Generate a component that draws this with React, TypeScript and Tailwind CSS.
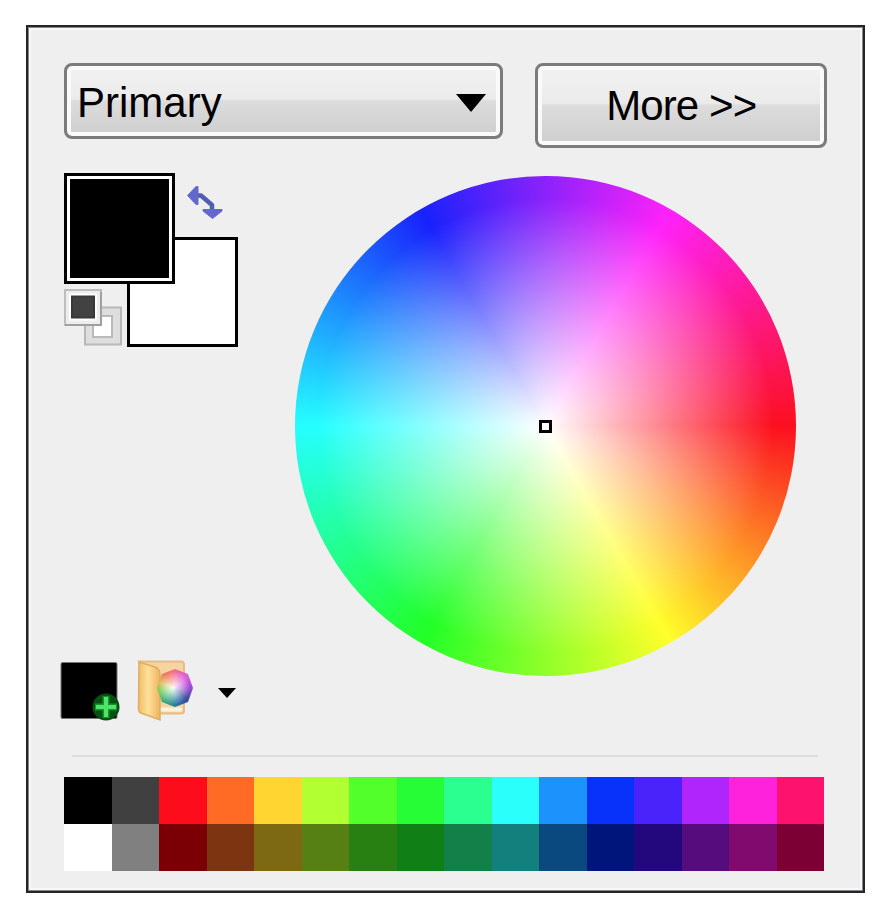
const topRow = [
  "bg-[#000000]", "bg-[#404040]", "bg-[#fd0c1b]", "bg-[#ff6a24]", "bg-[#ffd532]", "bg-[#b2ff32]",
  "bg-[#52ff2b]", "bg-[#27fd36]", "bg-[#2bff90]", "bg-[#2bfffb]", "bg-[#1c93fc]", "bg-[#0832fa]",
  "bg-[#4a22fa]", "bg-[#af25fc]", "bg-[#ff22dc]", "bg-[#fd126e]",
];

const bottomRow = [
  "bg-[#ffffff]", "bg-[#808080]", "bg-[#7b0005]", "bg-[#7d3410]", "bg-[#7d6813]", "bg-[#568013]",
  "bg-[#298012]", "bg-[#108016]", "bg-[#128048]", "bg-[#13807d]", "bg-[#0a4880]", "bg-[#00157c]",
  "bg-[#23077c]", "bg-[#560c7c]", "bg-[#800a6d]", "bg-[#7c0033]",
];

function SwapIcon() {
  return (
    <svg className="absolute left-[122px] top-[11px]" width="38" height="38" viewBox="0 0 38 38">
      <path d="M10 11.5 H15 L26 21 V27" fill="none" stroke="#4e5fb0" strokeWidth="4.5" strokeLinejoin="round" />
      <path d="M1.500 11.500 L10 2.500 H12 V20.500 H10 Z" fill="#6468cc" stroke="#6468cc" strokeLinejoin="round" />
      <path d="M17 25.500 V27 L26.500 34.500 L36 27 V25.500 Z" fill="#6468cc" stroke="#6468cc" strokeLinejoin="round" />
    </svg>
  );
}

function ResetColorsIcon() {
  return (
    <svg className="absolute left-0 top-[115px]" width="59" height="59" viewBox="0 0 59 59">
      <rect x="21" y="19.500" width="36" height="37" fill="#dedede" stroke="#b8b8b8" strokeWidth="2" />
      <rect x="29" y="28" width="19" height="21" fill="#fff" stroke="#bababa" strokeWidth="2" />
      <rect x="1" y="2" width="36" height="35" fill="#ededed" stroke="#bdbdbd" strokeWidth="2" />
      <path d="M1 37 H37 V4" fill="none" stroke="#a0a0a0" strokeWidth="2" />
      <rect x="6" y="6.500" width="26" height="25" fill="#393939" stroke="#fff" strokeWidth="2" />
      <rect x="9" y="9.500" width="20" height="19" fill="#424242" />
    </svg>
  );
}

function AddColorIcon() {
  return (
    <svg width="64" height="64" viewBox="0 0 64 64">
      <rect x="1" y="2.500" width="56" height="56" rx="1.500" fill="#000" stroke="#777" />
      <circle cx="46" cy="47" r="13.500" fill="#075012" />
      <path d="M46 36 V58 M35 47 H57" stroke="#17952d" strokeWidth="7" />
      <path d="M46 37 V57 M36 47 H56" stroke="#4ce569" strokeWidth="4" />
    </svg>
  );
}

function PaletteFolderIcon() {
  return (
    <svg width="60" height="64" viewBox="0 0 60 64">
      <defs>
        <linearGradient id="folder" x1="0" x2="1">
          <stop offset="0" stopColor="#efbd68" />
          <stop offset=".45" stopColor="#ffe09a" />
          <stop offset="1" stopColor="#edb45f" />
        </linearGradient>
        <clipPath id="hex"><path d="M38 9 L51 14 L56 28 L51 42 L38 47 L25 42 L20 28 L25 14 Z" /></clipPath>
      </defs>
      <path d="M2 1.500 H44 Q47 1.500 47 5 V51 Q47 53.500 44 53.500 H20 Z" fill="#f6d3a0" stroke="#e6bd88" strokeWidth="2" />
      <path d="M23 49.500 H45" stroke="#fff2dc" strokeWidth="4" />
      <path d="M2 2 L18 7 Q23 9 23 15 V60 L4 53 Q1.500 52 1.500 49 Z" fill="url(#folder)" stroke="#dfae64" strokeWidth="1.500" />
      <foreignObject x="20" y="9" width="36" height="38" clipPath="url(#hex)">
        <div className="h-full w-full bg-[radial-gradient(circle_at_45%_50%,#fffffff0_0%,#ffffff90_25%,transparent_62%),conic-gradient(from_0deg,#f06a96,#d95be2_50deg,#9a48d2_90deg,#344b9c_135deg,#237aa8_175deg,#2faa72_220deg,#68c944_260deg,#d5b544_290deg,#ef704f_325deg,#f06a96)]" />
      </foreignObject>
    </svg>
  );
}

export default function App() {
  return (
    <div className="h-[914px] w-[892px] bg-white pl-[26px] pt-[25px] font-['Liberation_Sans',Arial,sans-serif] text-black">
      <main className="flex h-[868px] w-[839px] flex-col border-[2px] border-[#242529] bg-[#efefef] px-[36px] pt-[36px] shadow-[inset_0_0_0_1px_#85868a,inset_0_0_0_3px_#f8f8f8]">
        <div className="flex items-start gap-8">
          <button className="flex h-[76px] w-[440px] items-center justify-between rounded-[8px] border-[3px] border-[#7b7b7b] bg-[linear-gradient(#f2f2f2_0%,#ebebeb_47%,#dcdcdc_50%,#cecece_100%)] pl-[10px] pr-[14px] shadow-[inset_0_0_0_4px_#fafafa]">
            <span className="pt-[3px] text-[42px] leading-[48px]">Primary</span>
            <svg className="mt-[3px]" width="30" height="18" viewBox="0 0 30 18"><path d="M0 0 H30 L15 18 Z" /></svg>
          </button>
          <button className="flex h-[85px] w-[292px] items-center justify-center rounded-[8px] border-[3px] border-[#7b7b7b] bg-[linear-gradient(#f2f2f2_0%,#ebebeb_47%,#dcdcdc_50%,#cecece_100%)] text-[42px] leading-[48px] tracking-[-0.9px] shadow-[inset_0_0_0_4px_#fafafa]">
            More &gt;&gt;
          </button>
        </div>

        <div className="mt-[25px] flex h-[549px]">
          <div className="flex w-[231px] flex-col justify-between">
            <div className="relative h-[175px] w-[175px]">
              <div className="absolute left-[63px] top-[64px] h-[110px] w-[111px] border-[3px] border-black bg-white" />
              <div className="absolute left-0 top-0 h-[111px] w-[111px] border-[3px] border-black bg-white p-[3px]">
                <div className="h-full w-full bg-black" />
              </div>
              <SwapIcon />
              <ResetColorsIcon />
            </div>
            <div className="-mb-[2px] -ml-1 flex items-center">
              <AddColorIcon />
              <div className="ml-[13px]"><PaletteFolderIcon /></div>
              <svg className="ml-[21px] mt-[2px]" width="18" height="10" viewBox="0 0 18 10"><path d="M0 0 H18 L9 10 Z" /></svg>
            </div>
          </div>
          <div className="mt-[3px] flex h-[500px] w-[501px] items-center justify-center rounded-full bg-[radial-gradient(circle_closest-side,#fff_0%,#ffffff00_91%),conic-gradient(from_90deg,#fc1020_0deg,#ffff2b_60deg,#22ff28_120deg,#24ffff_180deg,#1822fc_240deg,#ff22fa_300deg,#fc1020_360deg)]">
            <div className="h-[13px] w-[13px] border-[3px] border-black bg-white" />
          </div>
        </div>

        <div className="ml-2 mt-[33px] h-[2px] w-[746px] bg-[#d9dde0]" />
        <div className="mt-5 w-[760px]">
          <div className="grid h-[47px] grid-cols-16">
            {topRow.map((color) => <div key={color} className={color} />)}
          </div>
          <div className="grid h-[47px] grid-cols-16">
            {bottomRow.map((color) => <div key={color} className={color} />)}
          </div>
        </div>
      </main>
    </div>
  );
}
